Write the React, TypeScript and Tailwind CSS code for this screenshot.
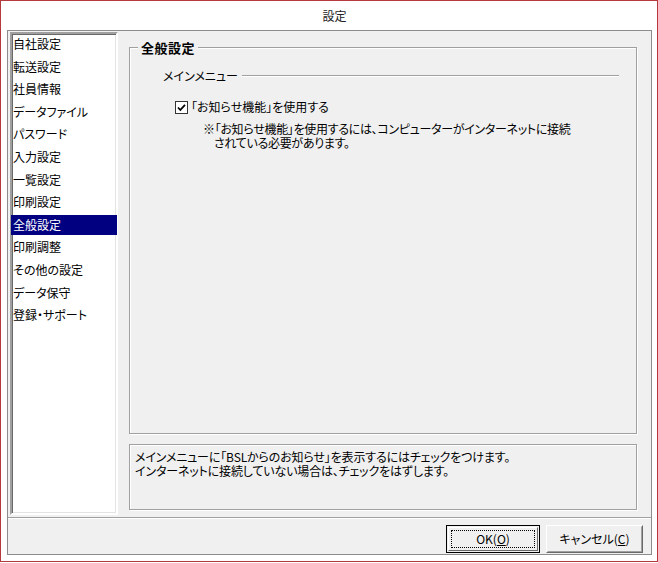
const menuItems = [
  '自社設定',
  '転送設定',
  '社員情報',
  'データファイル',
  'パスワード',
  '入力設定',
  '一覧設定',
  '印刷設定',
  '全般設定',
  '印刷調整',
  'その他の設定',
  'データ保守',
  '登録・サポート',
];

const etched = 'border border-[#a0a0a0] shadow-[inset_1px_1px_0_#ffffff,1px_1px_0_#ffffff]';

const CheckBox = () => (
  <svg width="13" height="13" viewBox="0 0 13 13" className="shrink-0">
    <rect x="0.5" y="0.5" width="12" height="12" fill="#ffffff" stroke="#333333" />
    <path d="M3 6.5 L5.3 9 L10 3.8" fill="none" stroke="#000000" strokeWidth="1.8" />
  </svg>
);

const App = () => {
  const selected = '全般設定';

  return (
    <div className="w-[658px] h-[563px] bg-white text-[12px] text-black font-['Noto_Sans_CJK_JP',sans-serif] [font-feature-settings:'palt']">
      <div className="h-[562px] border border-[#b4383c] flex flex-col">
        {/* title */}
        <div className="h-[29px] shrink-0 flex items-center justify-center pl-[11px] pt-[1px] text-[#222222] leading-[14px]">
          設定
        </div>

        {/* dialog body */}
        <div className="ml-[6px] mr-[5px] h-[525px] border border-[#8c8c8c] bg-[#f0f0f0] flex flex-col">
          <div className="h-[486px] shrink-0 flex pl-[2px] pr-[14px] gap-[11px]">
            {/* list */}
            <div className="mt-[1px] w-[108px] h-[483px] shrink-0 bg-white border-2 border-t-[#a0a0a0] border-l-[#a0a0a0] border-r-white border-b-white shadow-[inset_1px_1px_0_#696969,inset_-1px_-1px_0_#e3e3e3] flex flex-col gap-[2.6px]">
              {menuItems.map((item) => (
                <div
                  key={item}
                  className={
                    item === selected
                      ? 'h-[20px] leading-[19px] pl-[2px] mx-[-1px] bg-[#000080] text-white whitespace-nowrap'
                      : 'h-[20px] leading-[19px] pl-[1px] whitespace-nowrap'
                  }
                >
                  {item}
                </div>
              ))}
            </div>

            {/* right side */}
            <div className="w-[508px] shrink-0 flex flex-col">
              <div className={`relative mt-[16px] h-[387px] ${etched} pl-[33px] pr-[17px]`}>
                <div className="absolute left-[8px] -top-[8px] px-[3px] bg-[#f0f0f0] font-bold text-[13px] leading-[15px] tracking-[0.5px]">
                  全般設定
                </div>

                <div className="mt-[21px] flex items-center gap-[4px] leading-[14px]">
                  <span className="whitespace-nowrap">メインメニュー</span>
                  <div className="flex-1 h-[2px] border-t border-[#a0a0a0] border-b border-b-white" />
                </div>

                <div className="mt-[17px] ml-[12px] flex items-center gap-[3px] leading-[14px]">
                  <CheckBox />
                  <span className="whitespace-nowrap">「お知らせ機能」を使用する</span>
                </div>

                <div className="mt-[8px] ml-[40px] leading-[14px] tracking-[-0.3px]">
                  <div className="whitespace-nowrap">※「お知らせ機能」を使用するには、コンピューターがインターネットに接続</div>
                  <div className="pl-[11px] whitespace-nowrap">されている必要があります。</div>
                </div>
              </div>

              <div className={`mt-[10px] h-[66px] ${etched} pl-[5px] pt-[5px] leading-[14px] tracking-[-0.15px]`}>
                <div className="whitespace-nowrap">メインメニューに「BSLからのお知らせ」を表示するにはチェックをつけます。</div>
                <div className="whitespace-nowrap">インターネットに接続していない場合は、チェックをはずします。</div>
              </div>
            </div>
          </div>

          {/* separator */}
          <div className="h-[2px] shrink-0 border-t border-[#a0a0a0] border-b border-b-white" />

          {/* buttons */}
          <div className="flex justify-end gap-[6px] pt-[6px] pr-[8px]">
            <button className="w-[94px] h-[28px] border border-black bg-[#f0f0f0] p-[1px]">
              <div className="w-full h-full border border-t-white border-l-white border-r-[#696969] border-b-[#696969] p-[2px]">
                <div className="w-full h-full border border-dotted border-black flex items-center justify-center leading-[14px]">
                  OK(<span className="underline">O</span>)
                </div>
              </div>
            </button>
            <button className="w-[97px] h-[28px] border border-t-white border-l-white border-r-[#696969] border-b-[#696969] bg-[#f0f0f0]">
              <div className="w-full h-full border border-t-[#f0f0f0] border-l-[#f0f0f0] border-r-[#a0a0a0] border-b-[#a0a0a0] flex items-center justify-center leading-[14px]">
                キャンセル(<span className="underline">C</span>)
              </div>
            </button>
          </div>
        </div>
      </div>
    </div>
  );
};

export default App;
